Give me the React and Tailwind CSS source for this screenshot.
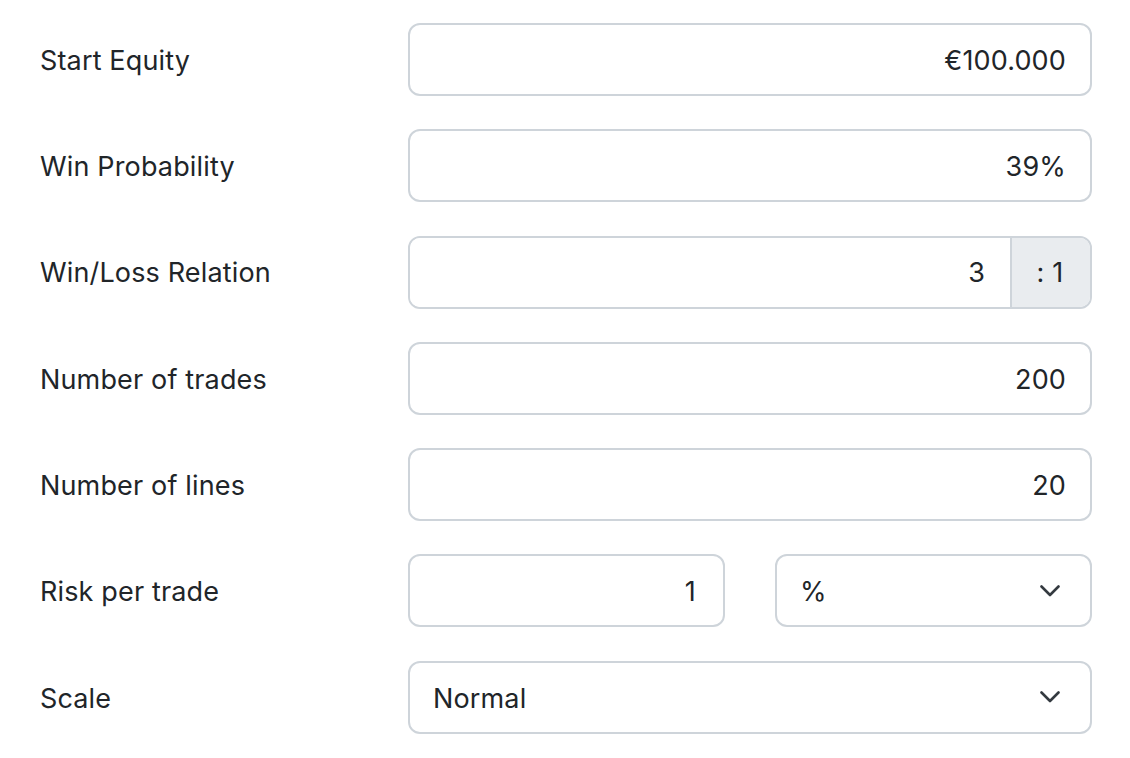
import React from "react";

const font = { fontFamily: "Inter, Roboto, 'Noto Sans', sans-serif", letterSpacing: "0.15px" };

function Chevron() {
  return (
    <svg width="20" height="12" viewBox="0 0 20 12" fill="none" className="shrink-0 -mt-[3px]">
      <path d="M1.5 1.5 L10 10 L18.5 1.5" stroke="#343a40" strokeWidth="2.6" strokeLinecap="round" strokeLinejoin="round" />
    </svg>
  );
}

function Row({ label, children }) {
  return (
    <div className="flex items-center h-[73px]">
      <div className="w-[368px] shrink-0 text-[27px] text-[#212529] pt-[3px]">{label}</div>
      <div className="w-[684px] h-full flex">{children}</div>
    </div>
  );
}

function Box({ children, className = "" }) {
  return (
    <div className={"h-full border-2 border-[#ced4da] rounded-[12px] bg-white flex items-center text-[27px] text-[#212529] pt-[3px] " + className}>
      {children}
    </div>
  );
}

export default function App() {
  return (
    <div className="w-[1130px] h-[758px] bg-white pl-[40px] pt-[23px]" style={font}>
      <div className="flex flex-col gap-[33.3px]">
        <Row label="Start Equity">
          <Box className="flex-1 justify-end pr-[24px]">€100.000</Box>
        </Row>
        <Row label="Win Probability">
          <Box className="flex-1 justify-end pr-[24px]">39%</Box>
        </Row>
        <Row label="Win/Loss Relation">
          <div className="flex-1 h-full flex border-2 border-[#ced4da] rounded-[12px] overflow-hidden text-[27px] text-[#212529]">
            <div className="flex-1 flex items-center justify-end pr-[25px] pt-[3px] bg-white">3</div>
            <div className="w-[80px] flex items-center justify-center bg-[#e9ecef] border-l-2 border-[#ced4da] pr-[2px] pt-[3px]">: 1</div>
          </div>
        </Row>
        <Row label="Number of trades">
          <Box className="flex-1 justify-end pr-[24px]">200</Box>
        </Row>
        <Row label="Number of lines">
          <Box className="flex-1 justify-end pr-[24px]">20</Box>
        </Row>
        <Row label="Risk per trade">
          <div className="grid grid-cols-2 w-full h-full gap-[50px]">
            <Box className="justify-end pr-[27px]">1</Box>
            <Box className="justify-between pl-[23px] pr-[30px]">
              <span>%</span>
              <Chevron />
            </Box>
          </div>
        </Row>
        <Row label="Scale">
          <Box className="flex-1 justify-between pl-[23px] pr-[30px]">
            <span>Normal</span>
            <Chevron />
          </Box>
        </Row>
      </div>
    </div>
  );
}
